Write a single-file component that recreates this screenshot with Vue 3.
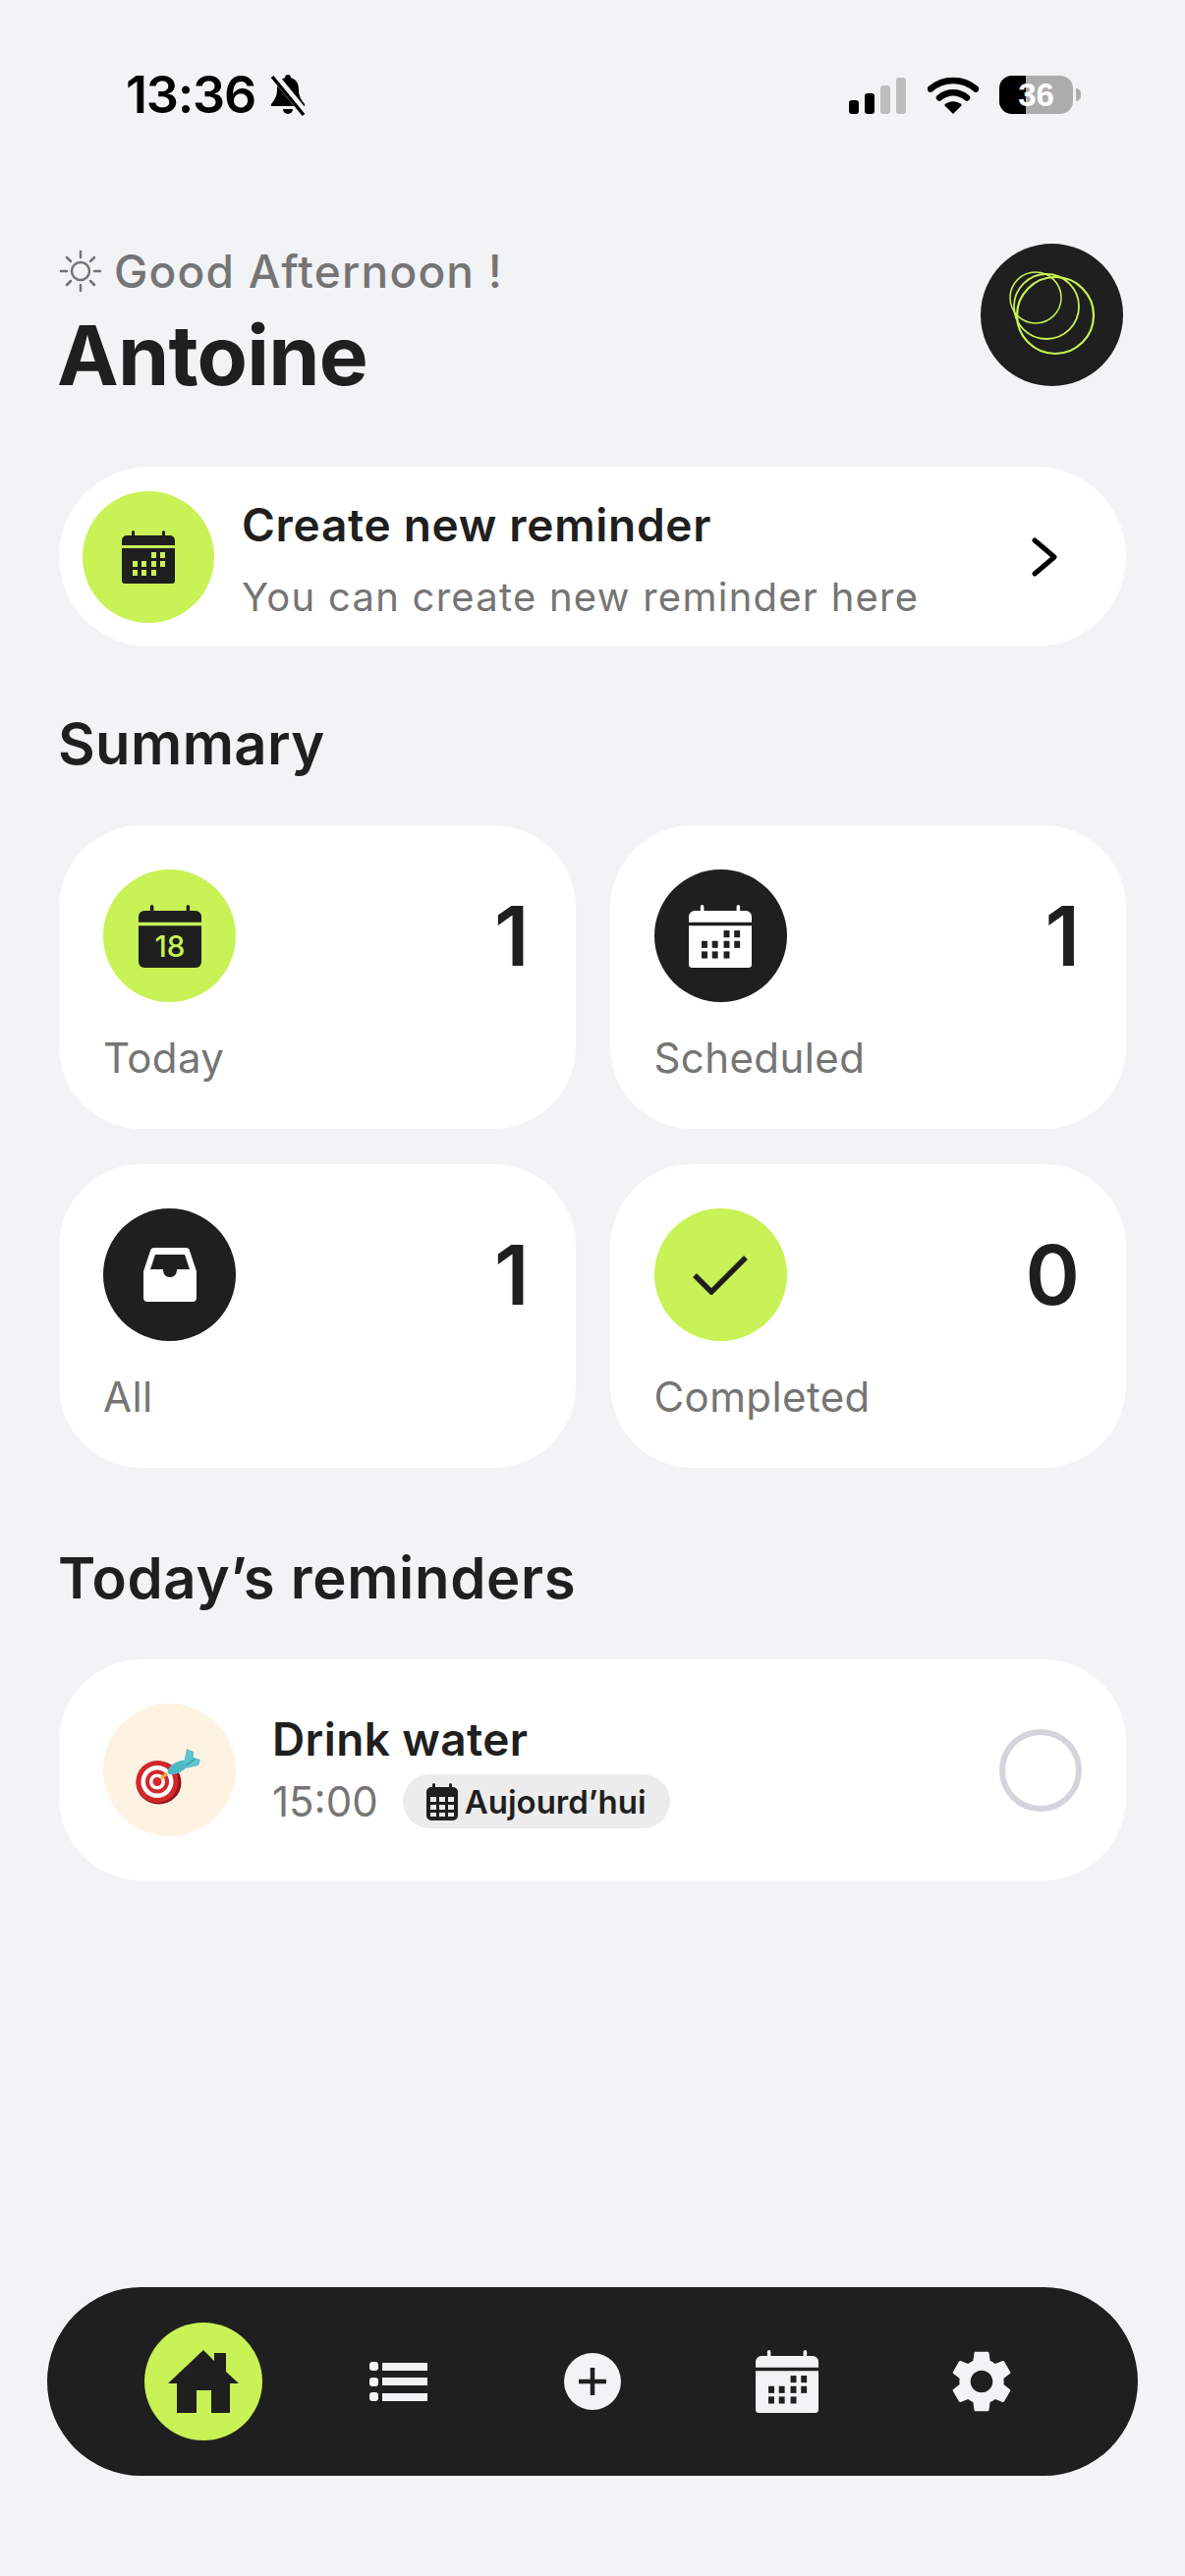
<script setup>
const calendarCells = [
  [30, 22], [39, 22],
  [11, 31], [20, 31], [30, 31], [39, 31],
  [11, 40], [20, 40], [30, 40],
]
const stats = [
  { key: 'today', label: 'Today', value: 1, tone: 'lime' },
  { key: 'scheduled', label: 'Scheduled', value: 1, tone: 'dark' },
  { key: 'all', label: 'All', value: 1, tone: 'dark' },
  { key: 'completed', label: 'Completed', value: 0, tone: 'lime' },
]
const calendarHead = 'M10 5V1.5a1.5 1.5 0 0 1 3 0V5h28V1.5a1.5 1.5 0 0 1 3 0V5h5a5 5 0 0 1 5 5v5H0v-5a5 5 0 0 1 5-5z'
const calendarBody = 'M0 18h54v33a3 3 0 0 1-3 3H3a3 3 0 0 1-3-3z'
const gear = 'M19.14 12.94c.04-.3.06-.61.06-.94 0-.32-.02-.64-.07-.94l2.03-1.58c.18-.14.23-.41.12-.61l-1.92-3.32c-.12-.22-.37-.29-.59-.22l-2.39.96c-.5-.38-1.03-.7-1.62-.94l-.36-2.54c-.04-.24-.24-.41-.48-.41h-3.84c-.24 0-.43.17-.47.41l-.36 2.54c-.59.24-1.13.57-1.62.94l-2.39-.96c-.22-.08-.47 0-.59.22L2.74 8.87c-.12.21-.08.47.12.61l2.03 1.58c-.05.3-.09.63-.09.94s.02.64.07.94l-2.03 1.58c-.18.14-.23.41-.12.61l1.92 3.32c.12.22.37.29.59.22l2.39-.96c.5.38 1.03.7 1.62.94l.36 2.54c.05.24.24.41.48.41h3.84c.24 0 .44-.17.47-.41l.36-2.54c.59-.24 1.13-.56 1.62-.94l2.39.96c.22.08.47 0 .59-.22l1.92-3.32c.12-.22.07-.47-.12-.61l-2.01-1.58zM12 15.6c-1.98 0-3.6-1.62-3.6-3.6s1.62-3.6 3.6-3.6 3.6 1.62 3.6 3.6-1.62 3.6-3.6 3.6z'
</script>

<template>
  <div class="page">
    <div class="status">
      <div class="status-left">
        <span class="clock">13:36</span>
        <svg class="bell" viewBox="0 0 38 44">
          <path d="M19 1c2 0 3 1.500 3 3.200 6 1.500 8 6.800 8 12 0 7 3 11 6 14.800v2H2v-2c3-3.800 6-7.800 6-14.800 0-5.200 2-10.500 8-12C16 2.500 17 1 19 1z" fill="#000" />
          <path d="M14 36h10a5 5 0 0 1-10 0z" fill="#000" />
          <path d="M5 2l31 38" stroke="#f2f3f5" stroke-width="8" />
          <path d="M3 3l32 39" stroke="#000" stroke-width="3.500" />
        </svg>
      </div>
      <div class="status-right">
        <div class="signal">
          <i class="bar b1"></i><i class="bar b2"></i><i class="bar b3"></i><i class="bar b4"></i>
        </div>
        <svg class="wifi" viewBox="0 0 52 38">
          <path d="M3 12.500C16 1 36 1 49 12.500" fill="none" stroke="#000" stroke-width="6.500" stroke-linecap="round" />
          <path d="M12 21.500c8.500-7 19.500-7 28 0" fill="none" stroke="#000" stroke-width="6.500" stroke-linecap="round" />
          <path d="M17 29c5-5 13-5 18 0l-9 9z" fill="#000" />
        </svg>
        <div class="battery">
          <div class="battery-body">
            <div class="battery-fill"></div>
            <span class="battery-text">36</span>
          </div>
          <i class="battery-nub"></i>
        </div>
      </div>
    </div>

    <header class="header">
      <div>
        <div class="greeting">
          <svg class="sun" viewBox="0 0 44 44" fill="none" stroke="#757575" stroke-width="2.500" stroke-linecap="round">
            <circle cx="22" cy="22" r="9" />
            <path d="M22 2v6M22 36v6M2 22h6M36 22h6M8 8l4 4M32 32l4 4M8 36l4-4M32 12l4-4" />
          </svg>
          <span>Good Afternoon !</span>
        </div>
        <h1 class="name">Antoine</h1>
      </div>
      <div class="avatar">
        <svg viewBox="0 0 145 145" fill="none" stroke="#c8f255">
          <circle cx="76" cy="73" r="39" stroke-width="2.200" />
          <circle cx="67" cy="64" r="33" stroke-width="1.800" />
          <circle cx="56" cy="55" r="26" stroke-width="1.500" />
        </svg>
      </div>
    </header>

    <main class="content">
      <section class="create card">
        <div class="circle lime create-circle">
          <svg class="cal-54" viewBox="0 0 54 54">
            <path :d="calendarHead" fill="#1f1f1f" />
            <path :d="calendarBody" fill="#1f1f1f" />
            <rect v-for="c in calendarCells" :key="c.join()" :x="c[0]" :y="c[1]" width="5" height="6" fill="#c8f255" />
          </svg>
        </div>
        <div class="create-text">
          <div class="create-title">Create new reminder</div>
          <div class="create-sub">You can create new reminder here</div>
        </div>
        <svg class="chevron" viewBox="0 0 26 40" fill="none" stroke="#000" stroke-width="5" stroke-linecap="round" stroke-linejoin="round">
          <path d="M3 3l20 17L3 37" />
        </svg>
      </section>

      <h2 class="section-title summary-title">Summary</h2>

      <section class="grid">
        <article v-for="s in stats" :key="s.key" class="stat card">
          <div class="stat-top">
            <div class="circle" :class="s.tone">
              <svg v-if="s.key === 'today'" class="cal-64" viewBox="0 0 54 54">
                <path :d="calendarHead" fill="#1f1f1f" />
                <path d="M0 18h54v31a5 5 0 0 1-5 5H5a5 5 0 0 1-5-5z" fill="#1f1f1f" />
                <text x="27" y="45" class="cal-date">18</text>
              </svg>
              <svg v-else-if="s.key === 'scheduled'" class="cal-64" viewBox="0 0 54 54">
                <path :d="calendarHead" fill="#fff" />
                <path :d="calendarBody" fill="#fff" />
                <rect v-for="c in calendarCells" :key="c.join()" :x="c[0]" :y="c[1]" width="5" height="6" fill="#1f1f1f" />
              </svg>
              <svg v-else-if="s.key === 'all'" class="tray" viewBox="0 0 54 55">
                <path d="M11 0h32a4 4 0 0 1 4 3l7 21v27a4 4 0 0 1-4 4H4a4 4 0 0 1-4-4V24L7 3a4 4 0 0 1 4-3z" fill="#fff" />
                <path d="M12 7h30l5 15H34c0 2-.5 8-7 8s-7-6-7-8H7z" fill="#1f1f1f" />
              </svg>
              <svg v-else class="check" viewBox="0 0 56 40" fill="none" stroke="#1f1f1f" stroke-width="5.500">
                <path d="M2 20l17 17L54 2" />
              </svg>
            </div>
            <span class="stat-value">{{ s.value }}</span>
          </div>
          <div class="stat-label">{{ s.label }}</div>
        </article>
      </section>

      <h2 class="section-title today-title">Today’s reminders</h2>

      <section class="reminder card">
        <div class="circle peach">
          <svg class="dart" viewBox="0 0 68 58">
            <ellipse cx="24.500" cy="35.500" rx="23" ry="22" fill="#8f1418" />
            <circle cx="23" cy="34.500" r="21.500" fill="#d3262b" />
            <circle cx="23" cy="34.500" r="16.500" fill="#fff" />
            <circle cx="23" cy="34.500" r="12" fill="#d3262b" />
            <circle cx="23" cy="34.500" r="8" fill="#fff" />
            <circle cx="23" cy="34.500" r="4.500" fill="#d3262b" />
            <path d="M27 31l6-5" stroke="#e8b23c" stroke-width="3" />
            <ellipse cx="44" cy="20" rx="11.500" ry="5.500" fill="#4db7c5" transform="rotate(-28 44 20)" />
            <path d="M50 15l3-14 7 3v6l7 2-2 6-13 3z" fill="#5cc3cf" />
            <path d="M52 18l10-7" stroke="#3a9aa8" stroke-width="1.500" />
          </svg>
        </div>
        <div class="reminder-text">
          <div class="reminder-title">Drink water</div>
          <div class="reminder-meta">
            <span class="time">15:00</span>
            <span class="pill">
              <svg class="pill-icon" viewBox="0 0 32 38">
                <path d="M6 4V1.500a1.500 1.500 0 0 1 3 0V4h14V1.500a1.500 1.500 0 0 1 3 0V4h1a5 5 0 0 1 5 5v24a5 5 0 0 1-5 5H5a5 5 0 0 1-5-5V9a5 5 0 0 1 5-5z" fill="#1f1f1f" />
                <g fill="#ececec">
                  <rect x="4" y="14" width="6" height="5" /><rect x="13" y="14" width="6" height="5" /><rect x="22" y="14" width="6" height="5" />
                  <rect x="4" y="22" width="6" height="5" /><rect x="13" y="22" width="6" height="5" /><rect x="22" y="22" width="6" height="5" />
                  <rect x="4" y="30" width="6" height="4" /><rect x="13" y="30" width="6" height="4" /><rect x="22" y="30" width="6" height="4" />
                </g>
              </svg>
              Aujourd’hui
            </span>
          </div>
        </div>
        <div class="radio"></div>
      </section>
    </main>

    <nav class="nav">
      <div class="nav-home">
        <svg class="home" viewBox="0 0 72 64">
          <path d="M36 0L47 11V3H59V22L72 34H63V64H44V41H29V64H9V34H0z" fill="#1f1f1f" />
        </svg>
      </div>
      <svg class="nav-list" viewBox="0 0 59 40">
        <g fill="#f2f3f5">
          <rect x="0" y="0" width="9" height="9" rx="3" /><rect x="13" y="1" width="46" height="8" />
          <rect x="0" y="16" width="9" height="9" rx="3" /><rect x="13" y="16" width="46" height="8" />
          <rect x="0" y="31" width="9" height="9" rx="3" /><rect x="13" y="32" width="46" height="8" />
        </g>
      </svg>
      <svg class="nav-plus" viewBox="0 0 58 58">
        <circle cx="29" cy="29" r="29" fill="#f2f3f5" />
        <path d="M15 29h28M29 15v28" stroke="#1f1f1f" stroke-width="4.500" />
      </svg>
      <svg class="nav-cal" viewBox="0 0 54 54">
        <path :d="calendarHead" fill="#f2f3f5" />
        <path :d="calendarBody" fill="#f2f3f5" />
        <rect v-for="c in calendarCells" :key="c.join()" :x="c[0]" :y="c[1]" width="5" height="6" fill="#1f1f1f" />
      </svg>
      <svg class="nav-gear" viewBox="2 1.500 20 21">
        <path :d="gear" fill="#f2f3f5" />
      </svg>
    </nav>
  </div>
</template>

<style>
html, body { margin: 0; background: #f2f3f5; }
</style>

<style scoped>
.page {
  width: 1206px;
  height: 2622px;
  background: #f2f3f5;
  display: flex;
  flex-direction: column;
  font-family: Inter, "Liberation Sans", sans-serif;
  color: #1f1f1f;
  overflow: hidden;
}
.status {
  height: 248px;
  box-sizing: border-box;
  padding: 74px 106px 0 128px;
  display: flex;
  justify-content: space-between;
  align-items: flex-start;
}
.status-left { display: flex; align-items: center; gap: 13px; height: 46px; }
.clock {
  font-family: Inter, "Liberation Sans", sans-serif;
  font-size: 52px;
  font-weight: 600;
  line-height: 46px;
  color: #000;
  letter-spacing: -1.200px;
}
.bell { width: 40px; height: 44px; flex: none; }
.status-right { display: flex; align-items: flex-end; height: 42px; margin-top: 3px; }
.signal { display: flex; align-items: flex-end; gap: 6px; width: 58px; margin-right: 22px; margin-bottom: 3px; }
.bar { display: block; width: 10px; border-radius: 3px; background: #000; }
.b1 { height: 14px; }
.b2 { height: 21px; }
.b3 { height: 29px; background: #bdbdbd; }
.b4 { height: 37px; background: #bdbdbd; }
.wifi { width: 52px; height: 38px; margin-right: 21px; margin-bottom: 3px; }
.battery { display: flex; align-items: center; gap: 3px; margin-bottom: 3px; }
.battery-body {
  position: relative;
  width: 75px;
  height: 39px;
  border-radius: 13px;
  background: #acacac;
  overflow: hidden;
  display: flex;
  align-items: center;
  justify-content: center;
}
.battery-fill { position: absolute; left: 0; top: 0; bottom: 0; width: 27px; background: #000; }
.battery-text {
  position: relative;
  color: #fff;
  font-family: "Liberation Sans", Arial, sans-serif;
  font-weight: 700;
  font-size: 33px;
  line-height: 39px;
}
.battery-nub { display: block; width: 5px; height: 13px; background: #acacac; border-radius: 0 6px 6px 0; }

.header {
  height: 145px;
  padding: 0 63px 0 60px;
  display: flex;
  justify-content: space-between;
  align-items: flex-start;
}
.greeting {
  display: flex;
  align-items: center;
  gap: 12px;
  height: 56px;
  font-size: 46px;
  color: #757575;
  font-weight: 450;
  letter-spacing: 1.200px;
}
.sun { width: 44px; height: 44px; flex: none; }
.name {
  margin: 8px 0 0 -2px;
  font-size: 84px;
  line-height: 100px;
  font-weight: 700;
  letter-spacing: -0.800px;
}
.avatar { width: 145px; height: 145px; border-radius: 50%; background: #1f1f1f; flex: none; }
.avatar svg { display: block; width: 145px; height: 145px; }

.content { padding: 0 60px; flex: 1; }
.card { background: #fff; box-sizing: border-box; }
.circle {
  width: 135px;
  height: 135px;
  border-radius: 50%;
  display: flex;
  align-items: center;
  justify-content: center;
  flex: none;
}
.lime { background: #c8f255; }
.dark { background: #1f1f1f; }
.peach { background: #fef2e2; }

.create {
  margin-top: 82px;
  height: 183px;
  border-radius: 92px;
  padding: 0 50px 0 24px;
  display: flex;
  align-items: center;
}
.create-circle { width: 134px; height: 134px; }
.cal-54 { width: 54px; height: 54px; }
.create-text { flex: 1; margin-left: 28px; padding-top: 6px; }
.create-title { font-size: 46px; line-height: 56px; font-weight: 600; letter-spacing: 0.700px; }
.create-sub { margin-top: 21px; font-size: 40px; line-height: 50px; color: #757575; letter-spacing: 1.250px; }
.chevron { width: 26px; height: 40px; flex: none; margin-right: 20px; }

.section-title { margin: 0; font-size: 58px; line-height: 70px; font-weight: 600; letter-spacing: 0.400px; }
.summary-title { margin-top: 64px; margin-left: -1px; }
.today-title { margin-top: 77px; margin-left: -1px; letter-spacing: 0.700px; }

.grid {
  margin-top: 48px;
  display: grid;
  grid-template-columns: 1fr 1fr;
  gap: 36px 35px;
}
.stat {
  height: 309px;
  border-radius: 84px;
  padding: 45px 47px 0 45px;
}
.stat-top { display: flex; justify-content: space-between; align-items: center; }
.stat-value { font-size: 84px; line-height: 100px; font-weight: 600; }
.stat-label { margin-top: 31px; font-size: 42px; line-height: 52px; color: #757575; letter-spacing: 0.400px; }
.cal-64 { width: 64px; height: 64px; }
.cal-date { font-family: Inter, sans-serif; font-size: 25px; font-weight: 500; fill: #c8f255; text-anchor: middle; }
.tray { width: 54px; height: 55px; }
.check { width: 56px; height: 40px; }

.reminder {
  margin-top: 48px;
  height: 225px;
  border-radius: 84px;
  padding: 0 45px;
  display: flex;
  align-items: center;
}
.dart { width: 68px; height: 58px; margin: 12px 0 0 -3px; }
.reminder-text { flex: 1; margin-left: 37px; padding-top: 3px; }
.reminder-title { font-size: 46px; line-height: 56px; font-weight: 600; letter-spacing: 0.400px; margin-top: -3px; }
.reminder-meta { display: flex; align-items: center; gap: 25px; margin-top: 8px; }
.time { font-size: 42px; color: #757575; }
.pill {
  height: 55px;
  padding: 0 24px;
  border-radius: 28px;
  background: #ececec;
  display: flex;
  align-items: center;
  gap: 7px;
  font-size: 33px;
  font-weight: 600;
}
.pill-icon { width: 32px; height: 38px; }
.radio {
  width: 84px;
  height: 84px;
  box-sizing: border-box;
  border-radius: 50%;
  border: 6px solid #d2d5db;
  flex: none;
}

.nav {
  margin: 0 48px 102px;
  height: 192px;
  background: #1f1f1f;
  border-radius: 96px;
  padding-left: 99px;
  display: flex;
  align-items: center;
}
.nav-home {
  width: 120px;
  height: 120px;
  border-radius: 50%;
  background: #c8f255;
  display: flex;
  align-items: center;
  justify-content: center;
  margin-right: 109px;
}
.home { width: 72px; height: 64px; }
.nav-list { width: 59px; height: 40px; margin-right: 139px; }
.nav-plus { width: 58px; height: 58px; margin-right: 137px; }
.nav-cal { width: 64px; height: 64px; margin-right: 134px; }
.nav-gear { width: 64px; height: 66px; }
</style>
